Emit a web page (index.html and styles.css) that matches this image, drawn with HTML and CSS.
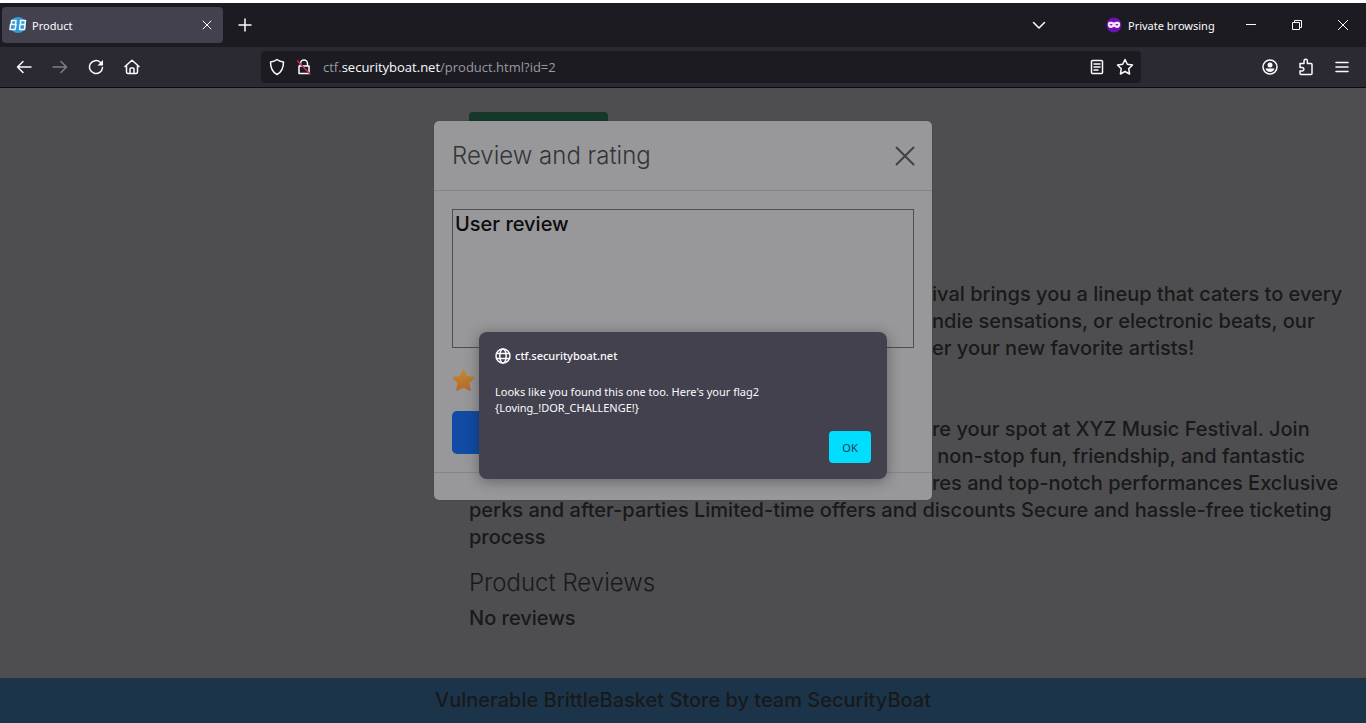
FILE: index.html
```html
<!DOCTYPE html>
<html lang="en">
<head>
    <meta charset="UTF-8">
    <meta name="viewport" content="width=device-width, initial-scale=1.0">
    <title>Product</title>
    <link rel="stylesheet" href="styles.css">
</head>
<body>
  <header class="browser">
    <div class="tabbar">
      <div class="tab">
        <svg class="favicon" width="18" height="16" viewBox="0 0 18 16">
          <circle cx="9" cy="8" r="8" fill="#2f9bd8"/>
          <g fill="none" stroke="#f4faff" stroke-width="1.5" stroke-linejoin="round">
            <path d="M2.500 3.500h4.500L6.500 7.500h-4zM1.500 7.500h5.500L6 12.500H1z"/>
            <path d="M11.500 3.500H16.500L16 7.500h-4.500zM11 7.500h5L15.500 12.500h-5z"/>
          </g>
        </svg>
        <span class="tab-title">Product</span>
        <button class="icon-btn tab-close" aria-label="Close tab">
          <svg width="10" height="10" viewBox="0 0 10 10"><path d="M1 1l8 8M9 1l-8 8"/></svg>
        </button>
      </div>
      <button class="icon-btn new-tab" aria-label="New tab">
        <svg width="14" height="14" viewBox="0 0 14 14"><path d="M7 1v12M1 7h12"/></svg>
      </button>
      <div class="window-area">
        <button class="icon-btn" aria-label="List all tabs">
          <svg width="14" height="14" viewBox="0 0 14 14"><path d="M1.500 4.500L7 10l5.500-5.500"/></svg>
        </button>
        <div class="private">
          <svg width="16" height="16" viewBox="0 0 16 16">
            <circle cx="8" cy="8" r="7.500" fill="#6d10b0"/>
            <path fill="#f3e4ff" stroke="none" fill-rule="evenodd" d="M1.800 7c0-1.700 1.300-2.200 2.700-2.200C6 4.800 7 5.500 8 5.500s2-.7 3.500-.7c1.400 0 2.700.5 2.700 2.200 0 2.500-1.200 4-3 4-1.600 0-2.200-1.300-3.200-1.300S6.400 11 4.800 11c-1.800 0-3-1.500-3-4zM3.500 7.800c.6.900 2.600.9 3.200 0-.6-1.200-2.600-1.200-3.200 0zM9.300 7.800c.6.900 2.600.9 3.200 0-.6-1.200-2.600-1.200-3.200 0z"/>
          </svg>
          <span>Private browsing</span>
        </div>
        <div class="window-buttons">
          <button class="icon-btn" aria-label="Minimize">
            <svg class="thin" width="12" height="12" viewBox="0 0 12 12"><path d="M1 5.500h10"/></svg>
          </button>
          <button class="icon-btn" aria-label="Restore">
            <svg class="thin" width="12" height="12" viewBox="0 0 12 12"><path d="M1.500 3.500h7v7h-7zM3.500 3.500v-2h7v7h-2"/></svg>
          </button>
          <button class="icon-btn" aria-label="Close">
            <svg class="thin" width="12" height="12" viewBox="0 0 12 12"><path d="M1 1l10 10M11 1L1 11"/></svg>
          </button>
        </div>
      </div>
    </div>

    <div class="toolbar">
      <nav class="nav-buttons">
        <button class="icon-btn" aria-label="Back">
          <svg width="16" height="16" viewBox="0 0 16 16"><path d="M15 8H1.500M7 2.500L1.500 8 7 13.500"/></svg>
        </button>
        <button class="icon-btn" aria-label="Forward" disabled>
          <svg width="16" height="16" viewBox="0 0 16 16"><path d="M1 8h13.500M9 2.500L14.500 8 9 13.500"/></svg>
        </button>
        <button class="icon-btn" aria-label="Reload">
          <svg width="16" height="16" viewBox="0 0 16 16"><path d="M14.500 8.500A6.500 6.500 0 1 1 12.300 3.200"/><path class="solid" d="M15 1v5.500H9.500z"/></svg>
        </button>
        <button class="icon-btn" aria-label="Home">
          <svg width="16" height="16" viewBox="0 0 16 16"><path d="M1 7.500L8 1.200l7 6.300M2.500 6.500V13c0 1 .5 1.500 1.500 1.500h8c1 0 1.500-.5 1.500-1.500V6.500M6 14.500V10c0-.6.400-1 1-1h2c.6 0 1 .4 1 1v4.500"/></svg>
        </button>
      </nav>
      <div class="urlbar">
        <svg width="16" height="18" viewBox="0 0 16 18"><path d="M8 1.500C6.500 2.700 3.500 3.700 1.500 4c0 6 1.500 10 6.500 12.500C13 14 14.500 10 14.500 4 12.500 3.700 9.500 2.700 8 1.500z"/></svg>
        <svg class="lock" width="16" height="18" viewBox="0 0 16 18">
          <path d="M4.500 8V5.500a3.500 3.500 0 0 1 7 0V8M3 8h10v7.500H3z"/>
          <path class="strike" d="M1.500 3l12.500 13"/>
        </svg>
        <a class="url" href="#">ctf.<b>securityboat.net</b>/product.html?id=2</a>
        <div class="url-actions">
          <svg width="16" height="16" viewBox="0 0 16 16"><path d="M3.500 1.500h9c.6 0 1 .4 1 1v11c0 .6-.4 1-1 1h-9c-.6 0-1-.4-1-1v-11c0-.6.400-1 1-1zM5 5h6M5 8h6M5 11h4"/></svg>
          <svg width="18" height="18" viewBox="0 0 18 18"><path d="M9 1.500l2.300 4.800 5.200.7-3.800 3.700.9 5.300L9 13.500 4.400 16l.9-5.300L1.500 7l5.200-.7z"/></svg>
        </div>
      </div>
      <div class="menu-buttons">
        <button class="icon-btn" aria-label="Account">
          <svg width="16" height="16" viewBox="0 0 16 16"><circle cx="8" cy="8" r="7"/><circle class="solid" cx="8" cy="6" r="2.500"/><path class="solid" d="M3.500 9.500h9c-.5 2-2.300 3.500-4.500 3.500S4 11.500 3.500 9.500z"/></svg>
        </button>
        <button class="icon-btn" aria-label="Extensions">
          <svg width="16" height="18" viewBox="0 0 16 18"><path d="M2 8V5.500h4V3a1.600 1.600 0 0 1 3.400 0v2.500h3.600c.6 0 1 .4 1 1v9c0 .6-.4 1-1 1H3c-.6 0-1-.4-1-1V13h2.200a1.700 1.700 0 0 0 0-3.400H2z"/></svg>
        </button>
        <button class="icon-btn" aria-label="Menu">
          <svg width="14" height="14" viewBox="0 0 14 14"><path d="M1 2.500h12M1 7h12M1 11.500h12"/></svg>
        </button>
      </div>
    </div>
  </header>

  <main class="page">
    <div class="product">
      <button class="review-btn" aria-label="Add a review"></button>
      <div class="description">
        <p>
          <span class="line"><span class="lead">fest</span>ival brings you a lineup that caters to every</span>
          <span class="line"><span class="lead">i</span>ndie sensations, or electronic beats, our</span>
          <span class="line"><span class="lead">discov</span>er your new favorite artists!</span>
        </p>
        <p>
          <span class="line"><span class="lead">secu</span>re your spot at XYZ Music Festival. Join</span>
          <span class="line"><span class="lead">of</span>&nbsp;non-stop fun, friendship, and fantastic</span>
          <span class="line"><span class="lead">featu</span>res and top-notch performances Exclusive</span>
          <span class="line">perks and after-parties Limited-time offers and discounts Secure and hassle-free ticketing</span>
          <span class="line">process</span>
        </p>
      </div>
      <h2>Product Reviews</h2>
      <p class="no-reviews">No reviews</p>
    </div>
    <footer class="site-footer">Vulnerable BrittleBasket Store by team SecurityBoat</footer>

    <div class="modal-layer">
      <form class="modal">
        <div class="modal-header">
          <h2><label for="review">Review and rating</label></h2>
          <button type="button" class="modal-close" aria-label="Close">
            <svg width="20" height="20" viewBox="0 0 20 20"><path d="M1.500 1.500l17 17M18.500 1.500l-17 17"/></svg>
          </button>
        </div>
        <div class="modal-body">
          <textarea id="review" name="review" spellcheck="false">User review</textarea>
          <svg class="star" width="23" height="23" viewBox="0 0 23 23">
            <defs>
              <linearGradient id="gold" x1="0" y1="0" x2="0" y2="1">
                <stop offset="0" stop-color="#c08a2c"/>
                <stop offset="1" stop-color="#b8692f"/>
              </linearGradient>
            </defs>
            <path fill="url(#gold)" stroke="url(#gold)" stroke-width="2" stroke-linejoin="round" d="M11.500 1.500l3 6.500 7 .8-5.200 4.900 1.500 7.300-6.300-3.500L5.200 21l1.500-7.300L1.500 8.800l7-.8z"/>
          </svg>
          <button type="submit" class="submit-btn" aria-label="Submit"></button>
        </div>
        <div class="modal-footer"></div>
      </form>
    </div>

    <div class="alert-layer">
      <div class="alert" role="alertdialog">
        <div class="alert-origin">
          <svg width="16" height="16" viewBox="0 0 16 16"><circle cx="8" cy="8" r="7"/><ellipse cx="8" cy="8" rx="3.200" ry="7"/><path d="M1.500 5.500h13M1.500 10.500h13"/></svg>
          <span>ctf.securityboat.net</span>
        </div>
        <p>Looks like you found this one too. Here's your flag2<br>{Loving_!DOR_CHALLENGE!}</p>
        <button class="ok-btn">OK</button>
      </div>
    </div>
  </main>
</body>
</html>
```
FILE: styles.css
```css
* {
    box-sizing: border-box;
}

body {
    margin: 0;
    height: 100vh;
    display: flex;
    flex-direction: column;
    overflow: hidden;
    font-family: "Noto Sans", "Open Sans", sans-serif;
    font-size: 11px;
    color: #fbfbfe;
}

button {
    font-family: inherit;
    border: none;
    padding: 0;
}

svg {
    display: block;
    flex: none;
    fill: none;
    stroke: #fbfbfe;
    stroke-width: 1.5;
    stroke-linecap: round;
    stroke-linejoin: round;
}

svg .solid {
    fill: #fbfbfe;
    stroke: none;
}

/* Browser window */
.browser {
    flex: none;
    border-top: 3px solid #ffffff;
    border-bottom: 1px solid #0c0c0d;
    background-color: #2b2a33;
}

.tabbar {
    display: flex;
    align-items: center;
    height: 44px;
    padding: 0 2px;
    background-color: #1c1b22;
}

.tab {
    display: flex;
    align-items: center;
    gap: 5px;
    width: 221px;
    height: 36px;
    padding: 0 6px 0 7px;
    border-radius: 4px;
    background-color: #42414d;
}

.favicon {
    stroke: none;
}

.icon-btn {
    display: flex;
    align-items: center;
    justify-content: center;
    width: 20px;
    height: 20px;
    background: none;
}

.icon-btn:disabled {
    opacity: 0.4;
}

.tab-close {
    margin-left: auto;
}

.tab-close svg {
    stroke-width: 1;
}

.new-tab {
    margin-left: 12px;
}

.window-area {
    display: flex;
    align-items: center;
    margin-left: auto;
}

.private {
    display: flex;
    align-items: center;
    gap: 6px;
    width: 111px;
    margin: 0 24px 0 57px;
    white-space: nowrap;
}

.private svg {
    stroke: none;
}

.window-buttons {
    display: flex;
    gap: 26px;
    padding-right: 11px;
}

.thin {
    stroke-width: 1;
    stroke-linecap: butt;
    stroke-linejoin: miter;
}

.toolbar {
    display: flex;
    align-items: center;
    justify-content: space-between;
    height: 40px;
    padding: 0 14px;
}

.nav-buttons {
    display: flex;
    gap: 16px;
    width: 247px;
}

.urlbar {
    display: flex;
    flex: 1;
    align-items: center;
    gap: 11px;
    height: 32px;
    padding: 0 7px 0 8px;
    border-radius: 4px;
    background-color: #1c1b22;
}

.lock .strike {
    stroke: #d3264f;
}

.url {
    color: #9a99a0;
    font-family: "Open Sans", "Noto Sans", sans-serif;
    font-size: 13px;
    text-decoration: none;
}

.url b {
    color: #fbfbfe;
    font-weight: 400;
}

.url-actions {
    display: flex;
    align-items: center;
    gap: 11px;
    margin-left: auto;
}

.menu-buttons {
    display: flex;
    justify-content: flex-end;
    gap: 16px;
    width: 211px;
}

/* Page under the backdrop */
.page {
    position: relative;
    flex: 1;
    display: flex;
    flex-direction: column;
    font-family: Inter, "Open Sans", sans-serif;
    font-size: 20px;
    font-weight: 500;
    line-height: 27px;
    color: #18191b;
    background-color: #4e4e50;
}

.page h2 {
    margin: 0;
    font-size: 24px;
    font-weight: 300;
    line-height: 27px;
}

.product {
    flex: 1;
    padding: 24px 16px 0 469px;
}

.review-btn {
    display: block;
    width: 139px;
    height: 38px;
    border-radius: 4px;
    background-color: #15382a;
}

.description {
    margin: 131px 0 18px;
}

.description p {
    margin: 0 0 54px;
}

.description p:last-child {
    margin: 0;
}

.line {
    display: flex;
    white-space: nowrap;
}

.lead {
    flex: none;
    width: 463px;
    text-align: right;
}

.no-reviews {
    margin: 9px 0 0;
}

.site-footer {
    height: 45px;
    line-height: 45px;
    text-align: center;
    background-color: #1c3449;
}

/* Review modal */
.modal-layer,
.alert-layer {
    position: absolute;
    inset: 0;
    display: flex;
    justify-content: center;
    align-items: flex-start;
}

.modal-layer {
    padding-top: 33px;
}

.modal {
    width: 498px;
    border-radius: 5px;
    background-color: #98989a;
    box-shadow: 0 0 1px #2c2c2e;
}

.modal-header {
    display: flex;
    align-items: center;
    justify-content: space-between;
    height: 70px;
    padding: 0 17px 0 18px;
    border-bottom: 1px solid #858688;
}

.modal-header h2 {
    color: #333437;
}

.modal-close {
    background: none;
}

.modal-close svg {
    stroke: #414144;
    stroke-width: 2;
}

.modal-body {
    padding: 18px;
}

.modal-body textarea {
    display: block;
    width: 100%;
    height: 139px;
    padding: 1px 2px;
    border: 1px solid #4d4e54;
    border-radius: 0;
    outline: none;
    resize: none;
    background: none;
    color: #0c0c0e;
    font: inherit;
}

.star {
    margin: 21px 0 19px;
    stroke: none;
}

.submit-btn {
    display: block;
    width: 140px;
    height: 43px;
    border-radius: 5px;
    background-color: #114ba3;
}

.modal-footer {
    height: 28px;
    border-top: 1px solid #858688;
}

/* Alert box */
.alert-layer {
    padding-top: 244px;
}

.alert {
    display: flex;
    flex-direction: column;
    width: 408px;
    padding: 16px;
    border-radius: 8px;
    background-color: #42414d;
    box-shadow: 0 2px 14px rgba(20, 20, 26, 0.4);
    color: #fbfbfe;
    font-family: "Noto Sans", "Open Sans", sans-serif;
    font-size: 11px;
    font-weight: 400;
    line-height: 16px;
}

.alert-origin {
    display: flex;
    align-items: center;
    gap: 4px;
    font-weight: 500;
}

.alert p {
    margin: 20px 0 15px;
}

.ok-btn {
    align-self: flex-end;
    width: 42px;
    height: 32px;
    border-radius: 4px;
    background-color: #00ddff;
    color: #1c3a46;
    font-size: 11px;
}
```
